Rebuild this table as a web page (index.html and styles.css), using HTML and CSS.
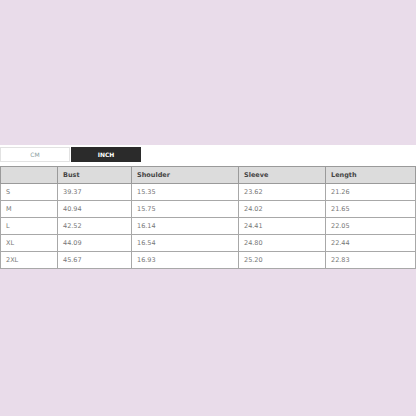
FILE: index.html
```html
<!DOCTYPE html>
<html>
<head>
<meta charset="utf-8">
<link rel="stylesheet" href="styles.css">
</head>
<body>
<div class="band">
  <div class="tabs">
    <div class="tab">CM</div>
    <div class="tab active">INCH</div>
  </div>
  <table class="size">
    <colgroup>
      <col class="c1"><col class="c2"><col class="c3"><col class="c4"><col class="c5">
    </colgroup>
    <thead>
      <tr><th></th><th>Bust</th><th>Shoulder</th><th>Sleeve</th><th>Length</th></tr>
    </thead>
    <tbody>
      <tr><td>S</td><td>39.37</td><td>15.35</td><td>23.62</td><td>21.26</td></tr>
      <tr><td>M</td><td>40.94</td><td>15.75</td><td>24.02</td><td>21.65</td></tr>
      <tr><td>L</td><td>42.52</td><td>16.14</td><td>24.41</td><td>22.05</td></tr>
      <tr><td>XL</td><td>44.09</td><td>16.54</td><td>24.80</td><td>22.44</td></tr>
      <tr><td>2XL</td><td>45.67</td><td>16.93</td><td>25.20</td><td>22.83</td></tr>
    </tbody>
  </table>
</div>
</body>
</html>
```
FILE: styles.css
```css
html, body {
  margin: 0;
  padding: 0;
  background: #e9dcea;
  width: 416px;
  height: 416px;
  overflow: hidden;
}
body {
  padding-top: 145px;
  box-sizing: border-box;
  font-family: "DejaVu Sans", Verdana, sans-serif;
}
.band {
  background: #ffffff;
  height: 123px;
  padding-top: 2px;
  box-sizing: border-box;
}
.tabs {
  display: flex;
  height: 15px;
}
.tab {
  width: 70px;
  box-sizing: border-box;
  border: 1px solid #e2e2e2;
  font-size: 6px;
  color: #8aa0a0;
  display: flex;
  align-items: center;
  justify-content: center;
}
.tab.active {
  margin-left: 1px;
  background: #2b2b2b;
  border-color: #2b2b2b;
  color: #ffffff;
  font-weight: bold;
}
.size {
  margin-top: 4px;
  border-collapse: collapse;
  width: 415px;
  table-layout: fixed;
}
.c1 { width: 57px; }
.c2 { width: 74px; }
.c3 { width: 107px; }
.c4 { width: 87px; }
.c5 { width: 90px; }
.size th, .size td {
  height: 16px;
  padding: 0 0 0 5px;
  border: 1px solid #a8a8a8;
  font-size: 6.5px;
  text-align: left;
  color: #777;
  white-space: nowrap;
}
.size th {
  background: #dcdcdc;
  color: #444;
  font-weight: bold;
  border-color: #9a9a9a;
}
.size tr td:nth-child(2), .size tr td:nth-child(4),
.size tr th:nth-child(2), .size tr th:nth-child(4) {
  border-left-color: #666;
}
```
